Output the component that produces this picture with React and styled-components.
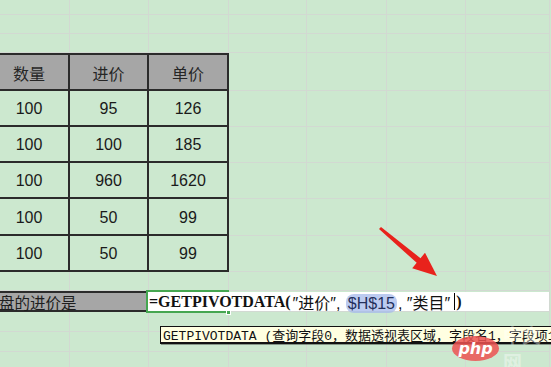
import React from 'react';
import styled, { createGlobalStyle } from 'styled-components';

const GlobalStyle = createGlobalStyle`
  html, body {
    margin: 0;
    padding: 0;
    background: #cce8cf;
  }
  * {
    box-sizing: border-box;
  }
`;

const COLS = [80, 79, 80, 78, 80, 79, 84];
const ROWS = [21, 19, 19, 38, 36, 36, 36, 37, 36, 19, 21, 20, 20, 20];
const HEAD_ROW = 3;
const LABEL_ROW = 10;

const TABLE = [
  ['数量', '进价', '单价'],
  ['100', '95', '126'],
  ['100', '100', '185'],
  ['100', '960', '1620'],
  ['100', '50', '99'],
  ['100', '50', '99'],
];

const Page = styled.div`
  position: relative;
  width: 551px;
  height: 367px;
  overflow: hidden;
  background: #cce8cf;
  font-family: "Liberation Sans", "Noto Sans CJK SC", sans-serif;
  color: #1a1a1a;
`;

const Sheet = styled.div`
  display: grid;
  grid-template-columns: ${COLS.map((w) => `${w}px`).join(' ')};
  grid-template-rows: ${ROWS.map((h) => `${h}px`).join(' ')};
  margin: -6px 0 0 -10px;
`;

const GridCell = styled.div`
  border-right: 1px solid #d2d9d2;
  border-bottom: 1px solid #d2d9d2;
`;

const TableCell = styled.div`
  display: flex;
  align-items: center;
  justify-content: center;
  padding-top: 2px;
  font-size: 16px;
  background: ${(p) => (p.$head ? '#a6a6a6' : 'transparent')};
  color: ${(p) => (p.$head ? '#262626' : '#1a1a1a')};
  border-right: 2px solid #2b2b2b;
  border-bottom: 2px solid #2b2b2b;
  border-top: ${(p) => (p.$head ? '2px solid #2b2b2b' : 'none')};
`;

const LabelCell = styled.div`
  grid-column: span 2;
  display: flex;
  align-items: center;
  padding-left: 9px;
  font-size: 15.5px;
  color: #1e1e1e;
  background: #a6a6a6;
  border-top: 2px solid #2b2b2b;
  border-bottom: 2px solid #2b2b2b;
`;

const FormulaCell = styled.div`
  position: relative;
  z-index: 2;
  margin: -1px 0 -1px -3px;
  border: 2px solid #45a650;
`;

const Editor = styled.div`
  position: absolute;
  top: 0;
  bottom: 0;
  left: 0;
  width: 401px;
  display: flex;
  align-items: center;
  padding-left: 1px;
  background: #ffffff;
  white-space: nowrap;
  font-size: 16px;
  color: #111;
`;

const Fn = styled.span`
  font-family: "Liberation Serif", "Noto Sans CJK SC", serif;
  font-weight: 700;
  font-size: 16px;
`;

const Arg = styled.span`
  margin-left: 2px;
`;

const Ref = styled.span`
  display: inline-block;
  padding: 0 2px;
  margin: 0 1px;
  border-radius: 8px;
  background: rgba(165, 185, 235, 0.75);
  color: #24305c;
  line-height: 19px;
`;

const Caret = styled.span`
  display: inline-block;
  width: 1px;
  height: 17px;
  margin: 0 1px 0 4px;
  background: #000;
`;

const Handle = styled.span`
  position: absolute;
  right: -4px;
  bottom: -4px;
  width: 5px;
  height: 5px;
  background: #45a650;
  border: 1px solid #fff;
`;

const Tooltip = styled.div`
  position: absolute;
  left: 160px;
  top: 326px;
  width: 420px;
  height: 18px;
  padding: 0 0 0 2px;
  display: flex;
  align-items: center;
  background: #ffffe1;
  border: 1px solid #111;
  border-bottom-width: 2px;
  box-shadow: 1px 1px 0 rgba(0, 0, 0, 0.35);
  font-family: "Liberation Mono", "Noto Sans CJK SC", monospace;
  font-size: 13px;
  white-space: nowrap;
  color: #111;
  z-index: 3;
`;

const Watermark = styled.div`
  position: absolute;
  left: 452px;
  top: 321px;
  display: flex;
  align-items: center;
  gap: 4px;
  z-index: 4;
  pointer-events: none;
`;

const Pill = styled.span`
  display: flex;
  align-items: center;
  justify-content: center;
  width: 56px;
  height: 25px;
  border-radius: 50%;
  background: rgba(236, 82, 82, 0.85);
  color: #fff;
  font-family: "DejaVu Sans", sans-serif;
  font-style: italic;
  font-weight: 700;
  font-size: 16px;
`;

const MarkText = styled.span`
  font-family: "Noto Sans CJK SC", sans-serif;
  font-weight: 700;
  font-size: 19px;
  color: rgba(255, 255, 255, 0.4);
`;

const Overlay = styled.svg`
  position: absolute;
  left: 0;
  top: 0;
  z-index: 5;
  pointer-events: none;
`;

function renderCell(r, c) {
  const key = `${r}-${c}`;
  if (r >= HEAD_ROW && r < HEAD_ROW + TABLE.length && c < 3) {
    return (
      <TableCell key={key} $head={r === HEAD_ROW}>
        {TABLE[r - HEAD_ROW][c]}
      </TableCell>
    );
  }
  if (r === LABEL_ROW) {
    if (c === 0) return <LabelCell key={key}>盘的进价是</LabelCell>;
    if (c === 1) return null;
    if (c === 2) {
      return (
        <FormulaCell key={key}>
          <Editor>
            <Fn>=GETPIVOTDATA(</Fn>
            <Arg>
              ″进价″, <Ref>$H$15</Ref>, ″类目″
            </Arg>
            <Caret />
            <Fn>)</Fn>
          </Editor>
          <Handle />
        </FormulaCell>
      );
    }
  }
  return <GridCell key={key} />;
}

export default function App() {
  return (
    <Page>
      <GlobalStyle />
      <Sheet>
        {ROWS.map((_, r) => COLS.map((__, c) => renderCell(r, c)))}
      </Sheet>

      <Tooltip>GETPIVOTDATA (查询字段0，数据透视表区域，字段名1，字段项1，...)</Tooltip>

      <Watermark>
        <Pill>php</Pill>
        <MarkText>中文网</MarkText>
      </Watermark>

      <Overlay width="551" height="367" viewBox="0 0 551 367">
        <defs>
          <filter id="soft" x="-20%" y="-20%" width="140%" height="140%">
            <feGaussianBlur stdDeviation="0.6" />
          </filter>
        </defs>
        <polygon
          points="381,226.9 420.5,258.2 425,252.8 437,276 412.2,268.2 416.7,262.8 379,229.1"
          fill="#e8221b"
          filter="url(#soft)"
        />
      </Overlay>
    </Page>
  );
}
